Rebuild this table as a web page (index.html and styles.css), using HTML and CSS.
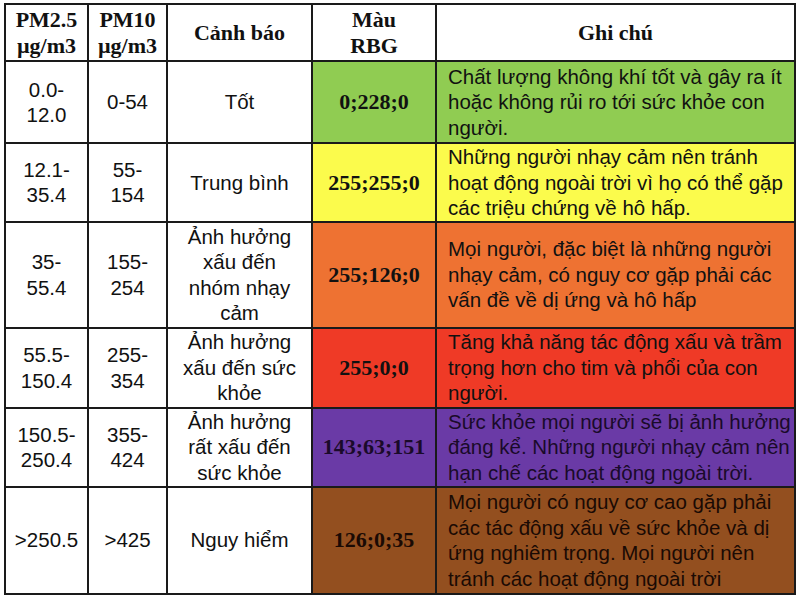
FILE: index.html
```html
<!DOCTYPE html>
<html lang="vi">
<head>
<meta charset="utf-8">
<title>Chỉ số chất lượng không khí</title>
<link rel="stylesheet" href="styles.css">
</head>
<body>
<table class="aqi">
  <colgroup>
    <col class="c1"><col class="c2"><col class="c3"><col class="c4"><col class="c5">
  </colgroup>
  <tr class="head">
    <th>PM2.5<br>µg/m3</th>
    <th>PM10<br>µg/m3</th>
    <th>Cảnh báo</th>
    <th>Màu<br>RBG</th>
    <th>Ghi chú</th>
  </tr>
  <tr class="r1 green">
    <td>0.0-<br>12.0</td>
    <td>0-54</td>
    <td>Tốt</td>
    <td class="rgb">0;228;0</td>
    <td class="note">Chất lượng không khí tốt và gây ra ít<br>hoặc không rủi ro tới sức khỏe con<br>người.</td>
  </tr>
  <tr class="r2 yellow">
    <td>12.1-<br>35.4</td>
    <td>55-<br>154</td>
    <td>Trung bình</td>
    <td class="rgb">255;255;0</td>
    <td class="note">Những người nhạy cảm nên tránh<br>hoạt động ngoài trời vì họ có thể gặp<br>các triệu chứng về hô hấp.</td>
  </tr>
  <tr class="r3 orange">
    <td>35-<br>55.4</td>
    <td>155-<br>254</td>
    <td>Ảnh hưởng<br>xấu đến<br>nhóm nhạy<br>cảm</td>
    <td class="rgb">255;126;0</td>
    <td class="note">Mọi người, đặc biệt là những người<br>nhạy cảm, có nguy cơ gặp phải các<br>vấn đề về dị ứng và hô hấp</td>
  </tr>
  <tr class="r4 red">
    <td>55.5-<br>150.4</td>
    <td>255-<br>354</td>
    <td>Ảnh hưởng<br>xấu đến sức<br>khỏe</td>
    <td class="rgb">255;0;0</td>
    <td class="note">Tăng khả năng tác động xấu và trầm<br>trọng hơn cho tim và phổi của con<br>người.</td>
  </tr>
  <tr class="r5 purple">
    <td>150.5-<br>250.4</td>
    <td>355-<br>424</td>
    <td>Ảnh hưởng<br>rất xấu đến<br>sức khỏe</td>
    <td class="rgb">143;63;151</td>
    <td class="note">Sức khỏe mọi người sẽ bị ảnh hưởng<br>đáng kể. Những người nhạy cảm nên<br>hạn chế các hoạt động ngoài trời.</td>
  </tr>
  <tr class="r6 brown">
    <td>&gt;250.5</td>
    <td>&gt;425</td>
    <td>Nguy hiểm</td>
    <td class="rgb">126;0;35</td>
    <td class="note">Mọi người có nguy cơ cao gặp phải<br>các tác động xấu về sức khỏe và dị<br>ứng nghiêm trọng. Mọi người nên<br>tránh các hoạt động ngoài trời</td>
  </tr>
</table>
</body>
</html>
```

FILE: styles.css
```css
html, body {
  background: #ffffff;
}
body {
  margin: 3px 0 0 4px;
  font-family: "Liberation Serif", serif;
  color: #111111;
}
.aqi {
  border-collapse: collapse;
  table-layout: fixed;
  width: 790px;
  font-size: 22px;
  line-height: 25.5px;
}
.c1 { width: 83px; }
.c2 { width: 79px; }
.c3 { width: 145px; }
.c4 { width: 124px; }
.c5 { width: 359px; }

.aqi th, .aqi td {
  border: 2px solid #1a1a1a;
  padding: 0 2px;
  text-align: center;
  vertical-align: middle;
  white-space: nowrap;
  overflow: hidden;
}
.aqi td {
  font-family: "Liberation Sans", Arial, sans-serif;
  font-size: 20.5px;
  font-weight: 400;
}
.aqi th {
  font-family: "Liberation Serif", serif;
  font-weight: 700;
  height: 55px;
}
.aqi td.rgb {
  font-family: "Liberation Serif", serif;
  font-size: 22px;
  font-weight: 700;
}
.aqi td.note {
  text-align: left;
  padding-left: 11px;
}
.r1 td { height: 80px; }
.r2 td { height: 75px; }
.r3 td { height: 104px; }
.r4 td { height: 78px; }
.r5 td { height: 77px; }
.r6 td { height: 105px; }

.green .rgb, .green .note { background: #90cc52; }
.yellow .rgb, .yellow .note { background: #fbfb4c; }
.orange .rgb, .orange .note { background: #ee7232; }
.red .rgb, .red .note { background: #ef3a26; }
.purple .rgb, .purple .note { background: #6a3aa6; color: #1a0a2a; }
.brown .rgb, .brown .note { background: #934f1f; color: #1a0a04; }
```
